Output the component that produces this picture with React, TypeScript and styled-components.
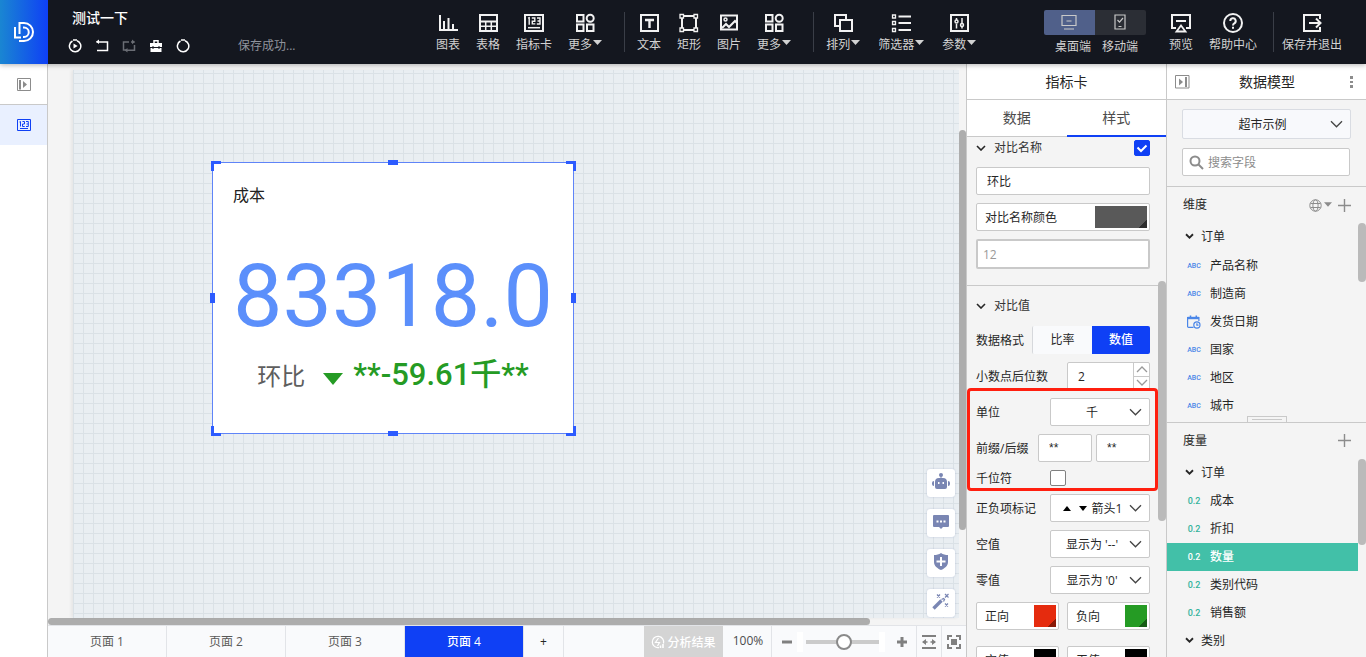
import React from 'react';
import styled, { createGlobalStyle, css } from 'styled-components';

const blue = '#0f40f5';
const line = '#c9c9c9';
const panelBg = '#f4f4f4';
const teal = '#42c0a8';

const GlobalStyle = createGlobalStyle`
  * { box-sizing: border-box; }
  body { margin: 0; overflow: hidden; }
  body, button, input, select {
    font-family: "Open Sans", "Noto Sans CJK SC", sans-serif;
    font-size: 12px;
    color: #262626;
  }
  button { padding: 0; border: 0; background: none; cursor: pointer; }
  svg { display: block; flex: none; }
  h1, h2, h3, p, ul { margin: 0; padding: 0; font-size: 12px; font-weight: 400; }
  li { list-style: none; }
`;

const Shell = styled.div`
  display: flex;
  flex-direction: column;
  height: 100vh;
  background: ${panelBg};
`;

/* ---------- header ---------- */

const Header = styled.header`
  display: flex;
  flex: none;
  height: 64px;
  padding-right: 24px;
  background: #14171f;
  box-shadow: 0 1px 5px rgba(0, 0, 0, 0.3);
  position: relative;
  z-index: 2;
`;

const Logo = styled.a`
  display: flex;
  align-items: center;
  justify-content: center;
  width: 48px;
  color: #fff;
  background: linear-gradient(90deg, #1a86d2, #0f40f5);
`;

const DocInfo = styled.div`
  flex: none;
  width: 388px;
  padding: 8px 0 0 20px;
`;

const DocTitle = styled.h1`
  padding-left: 4px;
  color: #fff;
  font-size: 14px;
  font-weight: 500;
  line-height: 20px;
`;

const DocActions = styled.div`
  display: flex;
  align-items: center;
  gap: 13px;
  height: 20px;
  margin-top: 8px;
`;

const IconButton = styled.button<{ $color?: string }>`
  display: flex;
  color: ${(p) => p.$color || '#fff'};
`;

const SaveState = styled.span`
  margin-left: 35px;
  color: #8f939c;
  font-size: 12px;
  line-height: 20px;
`;

const Toolbar = styled.nav`
  display: flex;
  flex: none;
`;

const ToolGroup = styled.div<{ $gap?: number }>`
  display: flex;
  gap: ${(p) => p.$gap || 16}px;
`;

const Divider = styled.span<{ $before: number; $after: number }>`
  width: 1px;
  height: 40px;
  margin: 12px ${(p) => p.$after}px 0 ${(p) => p.$before}px;
  background: #3a3e47;
`;

const Tool = styled.button`
  display: flex;
  flex-direction: column;
  align-items: center;
  gap: 3px;
  padding-top: 13px;
  height: 54px;
  color: #f2f2f2;
`;

const ToolLabel = styled.span`
  display: flex;
  align-items: center;
  gap: 1px;
  color: #d2d2d2;
  font-size: 12px;
  line-height: 18px;
  white-space: nowrap;
  svg { margin-bottom: 4px; }
`;

const HeaderEnd = styled.div`
  display: flex;
  margin-left: auto;
`;

const DeviceSwitch = styled.div`
  width: 102px;
  margin-right: 23px;
  padding-top: 10px;
`;

const DeviceButtons = styled.div`
  display: flex;
  border-radius: 2px;
  overflow: hidden;
`;

const DeviceButton = styled.button<{ $active?: boolean }>`
  display: flex;
  flex: 1;
  align-items: center;
  justify-content: center;
  height: 25px;
  padding-bottom: 1px;
  color: #c9c9c9;
  background: ${(p) => (p.$active ? '#50608a' : '#2b2e35')};
`;

const DeviceLabels = styled.div`
  display: flex;
  justify-content: space-between;
  padding: 2px 8px 0 11px;
  color: #d2d2d2;
  line-height: 20px;
`;

/* ---------- body ---------- */

const Body = styled.div`
  display: flex;
  flex: 1;
  min-height: 0;
`;

const Rail = styled.aside`
  flex: none;
  width: 48px;
  background: #fff;
  border-right: 1px solid ${line};
`;

const RailButton = styled.button<{ $active?: boolean }>`
  display: flex;
  align-items: center;
  justify-content: center;
  width: 100%;
  height: ${(p) => (p.$active ? 40 : 41)}px;
  border-bottom: ${(p) => (p.$active ? 0 : 1)}px solid ${line};
  color: ${(p) => (p.$active ? blue : '#8c8c8c')};
  background: ${(p) => (p.$active ? '#e9f0ff' : '#fff')};
`;

const Workspace = styled.main`
  display: flex;
  flex: 1;
  flex-direction: column;
  min-width: 0;
`;

const Stage = styled.div`
  display: flex;
  flex: 1;
  min-height: 0;
  padding-left: 25px;
`;

const Canvas = styled.div`
  position: relative;
  flex: 1;
  margin-top: 6px;
  background-color: #e9eef2;
  background-image: linear-gradient(90deg, #dae1e6 1px, transparent 1px),
    linear-gradient(#dae1e6 1px, transparent 1px);
  background-size: 10px 10px;
  background-position: 0 3px;
  box-shadow: -2px 0 3px rgba(0, 0, 0, 0.06);
`;

const VTrack = styled.div<{ $width: number }>`
  flex: none;
  width: ${(p) => p.$width}px;
`;

const VThumb = styled.div<{ $top: number; $size: number; $dark?: boolean }>`
  height: ${(p) => p.$size}px;
  border-radius: 4px;
  background: ${(p) => (p.$dark ? '#adadad' : '#bababa')};
  transform: translateY(${(p) => p.$top}px);
`;

const HTrack = styled.div`
  flex: none;
  height: 7px;
`;

const HThumb = styled.div`
  width: 822px;
  height: 7px;
  max-width: 100%;
  border-radius: 4px;
  background: #adadad;
`;

const Card = styled.section`
  position: absolute;
  left: 139px;
  top: 92px;
  width: 362px;
  height: 272px;
  border: 1px solid #5f84f8;
  background: #fff;
`;

const CardTitle = styled.h2`
  padding: 20px 20px 0;
  color: #222;
  font-size: 16px;
  line-height: 24px;
`;

const CardValue = styled.p`
  padding-top: 34px;
  color: #5b8ffb;
  font-family: Roboto, sans-serif;
  font-size: 88px;
  line-height: 110px;
  text-align: center;
`;

const CardCompare = styled.p`
  display: flex;
  align-items: baseline;
  justify-content: center;
  height: 48px;
  color: #5e5e5e;
  font-size: 24px;
`;

const CompareValue = styled.span`
  margin-left: 10px;
  color: #259b24;
  font-family: Roboto, "Noto Sans CJK SC", sans-serif;
  font-size: 31px;
  font-weight: 500;
  line-height: 48px;
`;

const Triangle = styled.span`
  margin: 0 0 1px 18px;
  border: 10px solid transparent;
  border-top: 12px solid #259b24;
  border-bottom: 0;
`;

const corner = {
  nw: css`left: -2px; top: -2px; border-width: 3px 0 0 3px;`,
  ne: css`right: -3px; top: -2px; border-width: 3px 3px 0 0;`,
  sw: css`left: -2px; bottom: -3px; border-width: 0 0 3px 3px;`,
  se: css`right: -3px; bottom: -3px; border-width: 0 3px 3px 0;`,
};

const Corner = styled.i<{ $at: keyof typeof corner }>`
  position: absolute;
  width: 10px;
  height: 10px;
  border: 0 solid #2c5bff;
  ${(p) => corner[p.$at]}
`;

const edge = {
  n: css`left: calc(50% - 5px); top: -3px; width: 10px; height: 5px;`,
  s: css`left: calc(50% - 5px); bottom: -3px; width: 10px; height: 5px;`,
  w: css`left: -3px; top: calc(50% - 5px); width: 5px; height: 10px;`,
  e: css`right: -3px; top: calc(50% - 5px); width: 5px; height: 10px;`,
};

const Edge = styled.i<{ $at: keyof typeof edge }>`
  position: absolute;
  background: #2c5bff;
  ${(p) => edge[p.$at]}
`;

const FloatTools = styled.div`
  position: absolute;
  right: 4px;
  bottom: 1px;
  display: flex;
  flex-direction: column;
  gap: 12px;
`;

const FloatTool = styled.button`
  display: flex;
  align-items: center;
  justify-content: center;
  width: 28px;
  height: 28px;
  padding-bottom: 3px;
  border-radius: 3px;
  color: #7a86b3;
  background: #fff;
  box-shadow: 0 0 2px rgba(80, 100, 160, 0.3);
`;

/* ---------- footer ---------- */

const Footer = styled.footer`
  display: flex;
  flex: none;
  height: 32px;
  border-top: 1px solid #e2e4e8;
  background: #f9fafc;
`;

const PageTab = styled.button<{ $active?: boolean }>`
  width: 119px;
  padding-bottom: 2px;
  border-right: 1px solid #e2e4e8;
  color: ${(p) => (p.$active ? '#fff' : '#595959')};
  font-weight: ${(p) => (p.$active ? 500 : 400)};
  background: ${(p) => (p.$active ? blue : 'transparent')};
`;

const AddPage = styled.button`
  width: 40px;
  border-right: 1px solid #e2e4e8;
`;

const FooterEnd = styled.div`
  display: flex;
  margin-left: auto;
`;

const AnalysisButton = styled.button`
  display: flex;
  align-items: center;
  justify-content: center;
  gap: 2px;
  width: 79px;
  color: #fff;
  font-weight: 500;
  background: #d4d4d4;
`;

const ZoomLevel = styled.output`
  width: 49px;
  padding-left: 2px;
  border-right: 1px solid #e2e4e8;
  color: #4c4c4c;
  line-height: 30px;
  text-align: center;
`;

const ZoomBar = styled.div`
  display: flex;
  align-items: center;
  justify-content: space-between;
  width: 145px;
  padding: 0 9px 0 10px;
  border-right: 1px solid #e2e4e8;
`;

const ZoomRange = styled.input`
  appearance: none;
  width: 88px;
  height: 20px;
  margin: 0 7px 0 0;
  padding: 0 0 0 3px;
  border: solid #fff;
  border-width: 0 6px;
  background: transparent;
  &::-webkit-slider-runnable-track {
    height: 4px;
    background: #cbcbcb;
  }
  &::-webkit-slider-thumb {
    appearance: none;
    width: 16px;
    height: 16px;
    margin-top: -6px;
    border: 2px solid #8a8a8a;
    border-radius: 50%;
    background: #fff;
  }
`;

const FooterIcon = styled.button`
  display: flex;
  align-items: center;
  justify-content: center;
  width: 24px;
  color: #808080;
  & + & { width: 25px; border-left: 1px solid #e2e4e8; }
`;

/* ---------- side panels ---------- */

const Panel = styled.aside`
  display: flex;
  flex: none;
  flex-direction: column;
  width: 200px;
  min-height: 0;
  border-left: 1px solid ${line};
  background: ${panelBg};
`;

const PanelHead = styled.header`
  display: flex;
  flex: none;
  align-items: center;
  justify-content: center;
  height: 36px;
  padding: 0 8px;
  border-bottom: 1px solid ${line};
  background: #fff;
`;

const PanelTitle = styled.h2`
  flex: 1;
  font-size: 14px;
  line-height: 20px;
  text-align: center;
`;

const Tabs = styled.div`
  display: flex;
  flex: none;
  height: 37px;
  background: #fff;
`;

const Tab = styled.button<{ $active?: boolean }>`
  flex: 1;
  padding-bottom: ${(p) => (p.$active ? 1 : 2)}px;
  border-bottom: ${(p) => (p.$active ? `2px solid ${blue}` : `1px solid ${line}`)};
  color: #4c4c4c;
  font-size: 14px;
`;

const PanelScroll = styled.div`
  display: flex;
  flex: 1;
  min-height: 0;
  overflow: hidden;
`;

const StyleForm = styled.form`
  flex: 1;
`;

const Section = styled.fieldset<{ $divided?: boolean }>`
  display: flex;
  flex-direction: column;
  gap: 8px;
  min-width: 0;
  margin: 0;
  padding: ${(p) => (p.$divided ? '8px 8px 0 9px' : '0 8px 16px 9px')};
  border: 0;
  border-top: ${(p) => (p.$divided ? `1px solid ${line}` : '0')};
`;

const SectionHead = styled.div<{ $height: number }>`
  display: flex;
  align-items: center;
  gap: 8px;
  height: ${(p) => p.$height}px;
  label, h3 { flex: 1; padding-bottom: 2px; color: #333; }
`;

const Row = styled.div<{ $short?: boolean }>`
  display: flex;
  align-items: center;
  justify-content: space-between;
  height: ${(p) => (p.$short ? 16 : 28)}px;
  > label, > span:first-child { padding-bottom: 1px; }
`;

const HighlightedRows = styled.div`
  position: relative;
  display: flex;
  flex-direction: column;
  gap: 8px;
  &::after {
    content: '';
    position: absolute;
    inset: -10px -8px -5px -9px;
    border: 3px solid #ff1f0f;
    border-radius: 4px;
    pointer-events: none;
  }
`;

const TextInput = styled.input<{ $width?: number; $thick?: boolean }>`
  width: ${(p) => (p.$width ? `${p.$width}px` : '100%')};
  height: ${(p) => (p.$thick ? 30 : 28)}px;
  padding: 0 ${(p) => (p.$thick ? 5 : 10)}px;
  border: ${(p) => (p.$thick ? 2 : 1)}px solid ${line};
  border-radius: 2px;
  outline: 0;
  background: #fff;
  &::placeholder { color: #999; }
`;

const AffixInput = styled(TextInput)`
  font-family: "Liberation Sans", "Noto Sans CJK SC", sans-serif;
`;

const CheckBox = styled.input`
  appearance: none;
  width: 16px;
  height: 16px;
  margin: 0;
  border: 1px solid #808080;
  border-radius: 2px;
  background: #fff;
  &:checked {
    border-color: ${blue};
    background: ${blue};
  }
`;

const CheckCell = styled.span<{ $width: number }>`
  display: grid;
  width: ${(p) => p.$width}px;
  > * { grid-area: 1 / 1; }
  svg { color: #fff; pointer-events: none; }
`;

const ColorButton = styled.button<{ $width?: number }>`
  display: flex;
  align-items: center;
  justify-content: space-between;
  width: ${(p) => (p.$width ? `${p.$width}px` : '100%')};
  height: 28px;
  padding: 0 2px 0 8px;
  border: 1px solid ${line};
  border-radius: 2px;
  background: #fff;
`;

const Swatch = styled.span<{ $color: string; $corner: string; $width: number }>`
  width: ${(p) => p.$width}px;
  height: 22px;
  background: linear-gradient(135deg, transparent 50%, ${(p) => p.$corner} 50%) right bottom / 8px 8px no-repeat,
    ${(p) => p.$color};
`;

const Toggle = styled.div`
  display: flex;
  border-left: 1px solid #d6d8dc;
  border-radius: 2px;
  overflow: hidden;
`;

const ToggleButton = styled.button<{ $active?: boolean }>`
  width: ${(p) => (p.$active ? 58 : 59)}px;
  height: 28px;
  padding-bottom: 2px;
  color: ${(p) => (p.$active ? '#fff' : '#262626')};
  font-weight: ${(p) => (p.$active ? 500 : 400)};
  background: ${(p) => (p.$active ? blue : '#f9fafc')};
`;

const Stepper = styled.div`
  display: flex;
  width: 83px;
  height: 28px;
  border: 1px solid ${line};
  border-radius: 2px;
  background: #fff;
  input {
    flex: 1;
    min-width: 0;
    padding: 0 10px;
    border: 0;
    outline: 0;
    background: none;
  }
`;

const StepButtons = styled.div`
  display: flex;
  flex-direction: column;
  width: 16px;
  border-left: 1px solid ${line};
  button {
    display: flex;
    flex: 1;
    align-items: center;
    justify-content: center;
    color: #999;
  }
  button + button { border-top: 1px solid ${line}; }
`;

const SelectBox = styled.span<{ $wide?: boolean }>`
  display: grid;
  align-items: center;
  width: ${(p) => (p.$wide ? '100%' : '100px')};
  > * { grid-area: 1 / 1; }
  > svg {
    justify-self: end;
    margin-right: 8px;
    color: #444;
    pointer-events: none;
  }
  select {
    appearance: none;
    width: 100%;
    height: ${(p) => (p.$wide ? 30 : 28)}px;
    padding: ${(p) => (p.$wide ? '0 16px 0 8px' : '0 24px 0 8px')};
    border: 1px solid ${(p) => (p.$wide ? '#d9dce2' : line)};
    border-radius: 2px;
    outline: 0;
    background: ${(p) => (p.$wide ? '#f8f9fc' : '#fff')};
    text-align-last: center;
  }
`;

const ArrowMarks = styled.span`
  z-index: 1;
  display: flex;
  justify-self: start;
  gap: 8px;
  padding-left: 13px;
  pointer-events: none;
  & + select { padding-left: 34px; padding-right: 20px; }
`;

const Inline = styled.div<{ $gap: number }>`
  display: flex;
  align-items: center;
  gap: ${(p) => p.$gap}px;
`;

const LastRow = styled(Row)`
  margin-top: 8px;
`;

const Source = styled.div`
  display: flex;
  flex: none;
  flex-direction: column;
  gap: 9px;
  padding: 9px 15px 10px;
  border-bottom: 1px solid ${line};
`;

const SearchBox = styled.label`
  display: flex;
  align-items: center;
  gap: 4px;
  height: 28px;
  margin-right: 1px;
  padding: 0 6px;
  border: 1px solid ${line};
  border-radius: 2px;
  color: #8c8c8c;
  background: #fff;
  input {
    flex: 1;
    min-width: 0;
    padding: 0;
    border: 0;
    outline: 0;
    background: none;
  }
  input::placeholder { color: #8c8c8c; }
`;

const FieldGroup = styled.section`
  position: relative;
  display: flex;
  flex: 1 1 0;
  flex-direction: column;
  min-height: 0;
  & + & { border-top: 1px solid ${line}; }
`;

const GroupHead = styled.header`
  display: flex;
  flex: none;
  align-items: center;
  gap: 6px;
  height: 36px;
  padding: 0 15px 0 16px;
  color: #8c8c8c;
  h3 { flex: 1; color: #262626; line-height: 18px; }
`;

const GroupBody = styled.div`
  display: flex;
  flex: 1;
  min-height: 0;
  overflow: hidden;
`;

const FieldList = styled.ul`
  flex: 1;
`;

const Folder = styled.li`
  display: flex;
  align-items: center;
  gap: 7px;
  height: 28px;
  padding: 0 0 2px 18px;
`;

const Field = styled.li<{ $active?: boolean }>`
  display: flex;
  align-items: center;
  gap: 8px;
  height: 28px;
  padding: 0 0 1px 19px;
  color: ${(p) => (p.$active ? '#fff' : '#262626')};
  font-weight: ${(p) => (p.$active ? 500 : 400)};
  background: ${(p) => (p.$active ? teal : 'transparent')};
`;

const TypeTag = styled.span<{ $tone: string; $small?: boolean }>`
  display: flex;
  justify-content: center;
  width: 16px;
  padding-top: 2px;
  color: ${(p) => p.$tone};
  font-family: Roboto, sans-serif;
  font-size: ${(p) => (p.$small ? 7 : 9)}px;
  font-weight: 500;
`;

const ResizeHandle = styled.span`
  position: absolute;
  left: 80px;
  bottom: 0;
  width: 40px;
  height: 6px;
  border: 1px solid ${line};
  border-bottom: 0;
  background: linear-gradient(${line}, ${line}) center / 30px 1px no-repeat;
`;

/* ---------- icons ---------- */

const Svg = ({ s = 20, w, sw = 2, children }: { s?: number; w?: number; sw?: number; children: React.ReactNode }) => (
  <svg
    width={w || s}
    height={s}
    viewBox={`0 0 ${w || s} ${s}`}
    fill="none"
    stroke="currentColor"
    strokeWidth={sw}
    aria-hidden="true"
  >
    {children}
  </svg>
);

const DownTriangle = ({ size = 9 }: { size?: number }) => (
  <svg width={size} height="6" viewBox="0 0 9 6" fill="currentColor" aria-hidden="true">
    <path d="M0 0h9L4.5 5z" />
  </svg>
);

const Chevron = ({ w = 13, up = false, sw = 1.3 }: { w?: number; up?: boolean; sw?: number }) => {
  const h = w / 2 + 1;
  return (
    <svg width={w} height={Math.ceil(h)} viewBox={`0 0 ${w} ${h}`} fill="none" stroke="currentColor" strokeWidth={sw} aria-hidden="true">
      <path d={up ? `M1 ${h - 1}L${w / 2} 1 ${w - 1} ${h - 1}` : `M1 1L${w / 2} ${h - 1} ${w - 1} 1`} />
    </svg>
  );
};

const icons = {
  chart: (
    <Svg>
      <path d="M2 2v15h18" />
      <path d="M6 17V8M10.5 17V5M15 17v-6" />
    </Svg>
  ),
  table: (
    <Svg>
      <path d="M2 2h17v16H2zM2 8.5h17" />
      <path strokeWidth="1.5" d="M2 13.3h17M7.7 8v10M13.3 8v10" />
    </Svg>
  ),
  kpi: (
    <Svg w={22}>
      <path d="M2 2h18v16H2z" />
      <path strokeWidth="1.5" d="M5 14.7h12" />
      <path strokeWidth="1.4" d="M5 5.2l1.2-.5v7M8.8 5h3v3.2h-2.500v2.700h3M14 5h3v6h-3.200M14.500 8H17" />
    </Svg>
  ),
  more: (
    <Svg w={22}>
      <path d="M3 2h6.500v6.500H3zM3 11.500h6.500V18H3zM13 11.500h6.500V18H13z" />
      <circle cx="16.200" cy="5.200" r="3.500" />
    </Svg>
  ),
  text: (
    <Svg>
      <path d="M2 2h17v16H2z" />
      <path strokeWidth="2.400" d="M6 7h9M10.500 6v9" />
    </Svg>
  ),
  rect: (
    <Svg>
      <path strokeWidth="2" d="M3 5v10M17 5v10M5 3h10M5 17h10" />
      <path strokeWidth="1.300" d="M1 1.500h3.500V5H1zM15 1.500h3.500V5H15zM1 15h3.500v3.500H1zM15 15h3.500v3.500H15z" />
    </Svg>
  ),
  image: (
    <Svg>
      <path d="M2 2.500h16v14H2z" />
      <circle cx="6.500" cy="6.500" r="1.500" strokeWidth="1.500" />
      <path strokeWidth="2" d="M3 15l4-4 3 3 6-6 2 2" />
    </Svg>
  ),
  arrange: (
    <Svg>
      <path d="M6 13H2V2h11v4" />
      <path d="M7 7h12v11H7z" />
    </Svg>
  ),
  filter: (
    <Svg>
      <path d="M7.500 3.500H20M7.500 10H20M7.500 17H20" />
      <path strokeWidth="1.300" d="M1.500 2h3v3h-3zM1.500 8.500h3v3h-3zM1.500 15.500h3v3h-3z" />
    </Svg>
  ),
  params: (
    <Svg>
      <path d="M2 2h17v16H2z" />
      <path strokeWidth="1.500" d="M7.500 5v2M7.500 11v4.500M13 5v5M13 13.500v2" />
      <circle cx="7.500" cy="8.500" r="1.500" strokeWidth="1.500" />
      <circle cx="13" cy="12" r="1.500" strokeWidth="1.500" />
    </Svg>
  ),
  preview: (
    <Svg w={22}>
      <path d="M6 15H2V2h18v13h-4" />
      <path d="M6 8h10" />
      <path strokeWidth="1.800" d="M11 12.500l4.500 6h-9z" />
    </Svg>
  ),
  help: (
    <Svg w={22}>
      <circle cx="11" cy="10" r="9" />
      <path d="M8.300 8a2.700 2.700 0 1 1 4 2.300c-1 .6-1.300 1-1.300 2.200M11 13.700v2" />
    </Svg>
  ),
  exit: (
    <Svg>
      <path d="M18 6V2H2v16h16v-4" />
      <path d="M7 10h11M14 5.500l4.500 4.500-4.500 4.500" />
    </Svg>
  ),
};

type ToolSpec = { icon: keyof typeof icons; label: string; menu?: boolean };

const elementTools: ToolSpec[] = [
  { icon: 'chart', label: '图表' },
  { icon: 'table', label: '表格' },
  { icon: 'kpi', label: '指标卡' },
  { icon: 'more', label: '更多', menu: true },
];

const shapeTools: ToolSpec[] = [
  { icon: 'text', label: '文本' },
  { icon: 'rect', label: '矩形' },
  { icon: 'image', label: '图片' },
  { icon: 'more', label: '更多', menu: true },
];

const pageTools: ToolSpec[] = [
  { icon: 'arrange', label: '排列', menu: true },
  { icon: 'filter', label: '筛选器', menu: true },
  { icon: 'params', label: '参数', menu: true },
];

const ToolItem = ({ icon, label, menu }: ToolSpec) => (
  <Tool>
    {icons[icon]}
    <ToolLabel>
      {label}
      {menu && <DownTriangle />}
    </ToolLabel>
  </Tool>
);

const ToolList = ({ tools, gap }: { tools: ToolSpec[]; gap?: number }) => (
  <ToolGroup $gap={gap}>
    {tools.map((tool) => (
      <ToolItem key={tool.label} {...tool} />
    ))}
  </ToolGroup>
);

const SelectField = ({ id, value, marks, wide, label }: { id: string; value: string; marks?: boolean; wide?: boolean; label?: string }) => (
  <SelectBox $wide={wide}>
    {marks && (
      <ArrowMarks>
        <svg width="8" height="5" viewBox="0 0 8 5" aria-hidden="true"><path d="M0 5h8L4 0z" /></svg>
        <svg width="8" height="5" viewBox="0 0 8 5" aria-hidden="true"><path d="M0 0h8L4 5z" /></svg>
      </ArrowMarks>
    )}
    <select id={id} aria-label={label}>
      <option>{value}</option>
    </select>
    <Chevron />
  </SelectBox>
);

const ColorField = ({ label, color, shade, width, swatch }: { label: string; color: string; shade: string; width?: number; swatch: number }) => (
  <ColorButton type="button" $width={width}>
    {label}
    <Swatch $color={color} $corner={shade} $width={swatch} />
  </ColorButton>
);

const CalendarIcon = () => (
  <svg width="14" height="14" viewBox="0 0 14 14" fill="none" stroke="currentColor" strokeWidth="1.2" aria-hidden="true">
    <path d="M6.500 12.400H1.600a1 1 0 0 1-1-1V2.500h11.300v3.500" />
    <path strokeWidth="2.400" d="M.6 3h11.300" />
    <path strokeWidth="1.500" d="M3.500.5v2M9.300.5v2" />
    <circle cx="9.900" cy="10" r="3.100" />
    <path d="M9.900 8.200v2h1.600" />
  </svg>
);

const dimensions = ['产品名称', '制造商', '发货日期', '国家', '地区', '城市'];
const measures = ['成本', '折扣', '数量', '类别代码', '销售额'];

export default function App() {
  return (
    <Shell>
      <GlobalStyle />
      <Header>
        <Logo href="#" aria-label="首页">
          <Svg s={22} sw={2}>
            <path d="M2 6v10.500h6" />
            <path d="M6.500 13V2h4.500a9 9 0 0 1 0 18H6" />
            <path d="M10 6.500h1a4.700 4.700 0 0 1 0 9.500h-1" />
          </Svg>
        </Logo>
        <DocInfo>
          <DocTitle>测试一下</DocTitle>
          <DocActions>
            <IconButton aria-label="刷新数据">
              <Svg s={14} sw={1.5}>
                <path d="M4.500 2a5.700 5.700 0 1 0 4.500-.3M5 1h4" />
                <path d="M5.500 4.500L9.700 7l-4.200 2.500z" fill="currentColor" stroke="none" />
              </Svg>
            </IconButton>
            <IconButton aria-label="撤销">
              <Svg s={14} sw={1.5}>
                <path d="M1.500 3H12.500v8.500H2" />
                <path d="M4 .5v4.500L1 2.800z" fill="currentColor" stroke="none" />
              </Svg>
            </IconButton>
            <IconButton aria-label="重做" $color="#6a6d74">
              <Svg s={14} sw={1.5}>
                <path d="M7 3H1.500v8H4M5 11.300h7.500V6M9 3h3.500" />
                <path d="M10 .5V5.300l3-2.400zM5.500 9v4.500l-3-2.200z" fill="currentColor" stroke="none" />
              </Svg>
            </IconButton>
            <IconButton aria-label="工具箱">
              <Svg s={14} sw={1.5}>
                <path d="M5 4V1.800h4V4" />
                <path d="M1 4h12v4H1zM1.500 9h11v4h-11z" fill="currentColor" stroke="none" />
                <path stroke="#14171f" strokeWidth="1" d="M4 7v3M10 7v3" />
              </Svg>
            </IconButton>
            <IconButton aria-label="刷新">
              <Svg s={14} sw={1.5}>
                <path d="M4.500 2a5.700 5.700 0 1 0 4.500-.3M5 1h4" />
              </Svg>
            </IconButton>
            <SaveState>保存成功...</SaveState>
          </DocActions>
        </DocInfo>
        <Toolbar>
          <ToolList tools={elementTools} />
          <Divider $before={22} $after={12} />
          <ToolList tools={shapeTools} />
          <Divider $before={22} $after={12} />
          <ToolList tools={pageTools} gap={18} />
        </Toolbar>
        <HeaderEnd>
          <DeviceSwitch>
            <DeviceButtons>
              <DeviceButton $active aria-labelledby="device-desktop">
                <Svg s={16} w={18} sw={1.2}>
                  <path d="M2 1.500h14v10H2zM6.500 7h5M4 15h10" />
                </Svg>
              </DeviceButton>
              <DeviceButton aria-labelledby="device-mobile">
                <Svg s={16} w={12} sw={1.2}>
                  <path d="M1 1h10v14H1zM3.500 6l2 2.200L9 4M4.500 12.500h3" />
                </Svg>
              </DeviceButton>
            </DeviceButtons>
            <DeviceLabels>
              <span id="device-desktop">桌面端</span>
              <span id="device-mobile">移动端</span>
            </DeviceLabels>
          </DeviceSwitch>
          <ToolGroup>
            <ToolItem icon="preview" label="预览" />
            <ToolItem icon="help" label="帮助中心" />
          </ToolGroup>
          <Divider $before={16} $after={8} />
          <ToolItem icon="exit" label="保存并退出" />
        </HeaderEnd>
      </Header>

      <Body>
        <Rail>
          <RailButton aria-label="展开页面列表">
            <Svg s={15} sw={1}>
              <path d="M1.500 1.500h13v12h-13z" />
              <path strokeWidth="2" d="M4 3v9.500" />
              <path d="M7 4l4 3.500-4 3.500z" fill="currentColor" stroke="none" />
            </Svg>
          </RailButton>
          <RailButton $active aria-label="指标卡">
            <Svg s={14} sw={1}>
              <path d="M.5 1.500h13v11H.5z" />
              <path d="M3 10.500h8M2.500 4l1-.5v5M5.500 3.500h2V6h-2v2.500h2.200M9 3.500h2.300v5H9M9.500 6H11" />
            </Svg>
          </RailButton>
        </Rail>

        <Workspace>
          <Stage>
            <Canvas>
              <Card>
                <CardTitle>成本</CardTitle>
                <CardValue>83318.0</CardValue>
                <CardCompare>
                  环比
                  <Triangle />
                  <CompareValue>**-59.61千**</CompareValue>
                </CardCompare>
                <Corner $at="nw" />
                <Corner $at="ne" />
                <Corner $at="sw" />
                <Corner $at="se" />
                <Edge $at="n" />
                <Edge $at="s" />
                <Edge $at="w" />
                <Edge $at="e" />
              </Card>
              <FloatTools>
                <FloatTool aria-label="智能助手">
                  <svg width="18" height="17" viewBox="0 0 18 17" fill="currentColor" aria-hidden="true">
                    <circle cx="9" cy="2" r="2" />
                    <path d="M8.500 3h1v3h-1zM3 9a4 4 0 0 1 4-4h4a4 4 0 0 1 4 4v5a2 2 0 0 1-2 2H5a2 2 0 0 1-2-2zM2 8v5a2 2 0 0 1-2-2v-1a2 2 0 0 1 2-2zM16 8v5a2 2 0 0 0 2-2v-1a2 2 0 0 0-2-2z" />
                    <path fill="#fff" d="M6 9h1.500v2H6zM10.500 9H12v2h-1.500z" />
                  </svg>
                </FloatTool>
                <FloatTool aria-label="评论">
                  <svg width="16" height="14" viewBox="0 0 16 14" fill="currentColor" aria-hidden="true">
                    <path d="M1 0h14a1 1 0 0 1 1 1v10a1 1 0 0 1-1 1h-5l-2 2-2-2H1a1 1 0 0 1-1-1V1a1 1 0 0 1 1-1z" />
                    <path fill="#fff" d="M3.500 5.500h2v2h-2zM7 5.500h2v2H7zM10.500 5.500h2v2h-2z" />
                  </svg>
                </FloatTool>
                <FloatTool aria-label="安全">
                  <svg width="16" height="17" viewBox="0 0 16 17" fill="currentColor" aria-hidden="true">
                    <path d="M8 0c2 1.500 4.500 2 7 2v7c0 4-3.500 6.500-7 8-3.500-1.500-7-4-7-8V2c2.500 0 5-.5 7-2z" />
                    <path stroke="#fff" strokeWidth="2" d="M8 4v9M3.500 8.500h9" />
                  </svg>
                </FloatTool>
                <FloatTool aria-label="美化">
                  <Svg s={18} sw={1.2}>
                    <path strokeWidth="3.400" d="M1.500 15.500l8-8" />
                    <path strokeWidth="1.300" d="M9.500 6.500l2-1 1 1-1 2" />
                    <path d="M5 1.500l3 3M8 1.500l-3 3M13 1l3.500 3.500M16.500 1L13 4.500M13 10.500l3 3M16 10.500l-3 3" />
                  </Svg>
                </FloatTool>
              </FloatTools>
            </Canvas>
            <VTrack $width={7}>
              <VThumb $top={66} $size={400} $dark />
            </VTrack>
          </Stage>
          <HTrack>
            <HThumb />
          </HTrack>
          <Footer>
            <PageTab>页面 1</PageTab>
            <PageTab>页面 2</PageTab>
            <PageTab>页面 3</PageTab>
            <PageTab $active>页面 4</PageTab>
            <AddPage aria-label="新增页面">+</AddPage>
            <FooterEnd>
              <AnalysisButton>
                <Svg s={14} sw={1.2}>
                  <path d="M12.500 8.500A5.700 5.700 0 1 0 8 12.600" />
                  <path d="M7.500 3L4.500 7.500h4L6.500 11" />
                  <path strokeWidth="1.600" d="M9.500 13V10.500M12 13V9" />
                </Svg>
                分析结果
              </AnalysisButton>
              <ZoomLevel>100%</ZoomLevel>
              <ZoomBar>
                <IconButton aria-label="缩小" $color="#808080">
                  <Svg s={10} sw={3}><path d="M0 5h10" /></Svg>
                </IconButton>
                <ZoomRange type="range" min={0} max={200} defaultValue={106} aria-label="缩放比例" />
                <IconButton aria-label="放大" $color="#808080">
                  <Svg s={10} sw={3}><path d="M0 5h10M5 0v10" /></Svg>
                </IconButton>
              </ZoomBar>
              <FooterIcon aria-label="适应宽度">
                <Svg s={14} sw={2}>
                  <path d="M0 1h14M0 13h14" />
                  <path strokeWidth="1.500" d="M1 7h4.500M8.500 7H13" />
                  <path d="M4 4v6L0 7zM10 4v6l4-3z" fill="currentColor" stroke="none" />
                </Svg>
              </FooterIcon>
              <FooterIcon aria-label="适应页面">
                <Svg s={14} sw={2}>
                  <path d="M1 5V1h4M9 1h4v4M13 9v4H9M5 13H1V9" />
                  <path d="M4 4h6v6H4z" fill="currentColor" stroke="none" />
                </Svg>
              </FooterIcon>
            </FooterEnd>
          </Footer>
        </Workspace>

        <Panel>
          <PanelHead>
            <PanelTitle>指标卡</PanelTitle>
          </PanelHead>
          <Tabs>
            <Tab>数据</Tab>
            <Tab $active>样式</Tab>
          </Tabs>
          <PanelScroll>
            <StyleForm>
              <Section>
                <SectionHead $height={22}>
                  <Chevron w={10} sw={1.6} />
                  <label htmlFor="compare-name">对比名称</label>
                  <CheckCell $width={16}>
                    <CheckBox type="checkbox" id="compare-name" defaultChecked />
                    <Svg s={16} sw={2}><path d="M3.500 7.500l3.500 3.500 5.500-5.500" /></Svg>
                  </CheckCell>
                </SectionHead>
                <TextInput defaultValue="环比" aria-label="名称" />
                <ColorField label="对比名称颜色" color="#595959" shade="#2e2e2e" swatch={52} />
                <TextInput $thick placeholder="12" aria-label="字号" />
              </Section>
              <Section $divided>
                <SectionHead $height={24}>
                  <Chevron w={10} sw={1.6} />
                  <h3>对比值</h3>
                </SectionHead>
                <Row>
                  <span>数据格式</span>
                  <Toggle>
                    <ToggleButton type="button">比率</ToggleButton>
                    <ToggleButton type="button" $active>数值</ToggleButton>
                  </Toggle>
                </Row>
                <Row>
                  <label htmlFor="decimals">小数点后位数</label>
                  <Stepper>
                    <input id="decimals" defaultValue="2" />
                    <StepButtons>
                      <button type="button" aria-label="增加"><Chevron w={12} up /></button>
                      <button type="button" aria-label="减少"><Chevron w={12} /></button>
                    </StepButtons>
                  </Stepper>
                </Row>
                <HighlightedRows>
                  <Row>
                    <label htmlFor="unit">单位</label>
                    <SelectField id="unit" value="千" />
                  </Row>
                  <Row>
                    <label htmlFor="prefix">前缀/后缀</label>
                    <Inline $gap={4}>
                      <AffixInput id="prefix" $width={54} defaultValue="**" />
                      <AffixInput $width={54} defaultValue="**" aria-label="后缀" />
                    </Inline>
                  </Row>
                  <Row $short>
                    <label htmlFor="thousands">千位符</label>
                    <CheckCell $width={100}>
                      <CheckBox type="checkbox" id="thousands" />
                    </CheckCell>
                  </Row>
                </HighlightedRows>
                <Row>
                  <label htmlFor="marks">正负项标记</label>
                  <SelectField id="marks" value="箭头1" marks />
                </Row>
                <Row>
                  <label htmlFor="empty">空值</label>
                  <SelectField id="empty" value="显示为 '--'" />
                </Row>
                <Row>
                  <label htmlFor="zero">零值</label>
                  <SelectField id="zero" value="显示为 '0'" />
                </Row>
                <Row>
                  <ColorField label="正向" color="#e52b0e" shade="#8a1a08" width={83} swatch={22} />
                  <ColorField label="负向" color="#259b24" shade="#165c15" width={83} swatch={22} />
                </Row>
                <LastRow>
                  <ColorField label="空值" color="#000" shade="#000" width={83} swatch={22} />
                  <ColorField label="无值" color="#000" shade="#000" width={83} swatch={22} />
                </LastRow>
              </Section>
            </StyleForm>
            <VTrack $width={8}>
              <VThumb $top={144} $size={240} />
            </VTrack>
          </PanelScroll>
        </Panel>

        <Panel>
          <PanelHead>
            <IconButton aria-label="收起面板" $color="#8c8c8c">
              <Svg s={15} sw={1}>
                <path d="M.5 1.500h13.500v12.500H.5z" />
                <path strokeWidth="2" d="M11 3v10" />
                <path d="M4 4.500L8 8l-4 3.500z" fill="currentColor" stroke="none" />
              </Svg>
            </IconButton>
            <PanelTitle>数据模型</PanelTitle>
            <IconButton aria-label="更多操作" $color="#8c8c8c">
              <svg width="14" height="14" viewBox="0 0 14 14" fill="currentColor" aria-hidden="true">
                <path d="M6 1h3v3H6zM6 6h3v2H6zM6 10h3v3H6z" />
              </svg>
            </IconButton>
          </PanelHead>
          <Source>
            <SelectField id="source" label="数据模型" value="超市示例" wide />
            <SearchBox>
              <Svg s={15} sw={2}>
                <circle cx="6" cy="6" r="4.500" />
                <path d="M9.500 9.500l4.500 4.500" />
              </Svg>
              <input placeholder="搜索字段" aria-label="搜索字段" />
            </SearchBox>
          </Source>
          <FieldGroup>
            <GroupHead>
              <h3>维度</h3>
              <Inline $gap={2}>
                <Svg s={13} sw={1}>
                  <circle cx="6.500" cy="6.500" r="5.700" />
                  <ellipse cx="6.500" cy="6.500" rx="2.600" ry="5.700" />
                  <path d="M1.500 4.500h10M1.500 8.500h10" />
                </Svg>
                <DownTriangle size={8} />
              </Inline>
              <IconButton aria-label="新增维度" $color="#8c8c8c">
                <Svg s={13} sw={1.4}><path d="M0 6.500h13M6.500 0v13" /></Svg>
              </IconButton>
            </GroupHead>
            <GroupBody>
              <FieldList>
                <Folder>
                  <Chevron w={9} sw={1.8} />
                  订单
                </Folder>
                {dimensions.map((name) => (
                  <Field key={name}>
                    <TypeTag $tone="#4a86e8" $small>{name === '发货日期' ? <CalendarIcon /> : 'ABC'}</TypeTag>
                    {name}
                  </Field>
                ))}
              </FieldList>
              <VTrack $width={8}>
                <VThumb $top={0} $size={59} />
              </VTrack>
            </GroupBody>
            <ResizeHandle />
          </FieldGroup>
          <FieldGroup>
            <GroupHead>
              <h3>度量</h3>
              <IconButton aria-label="新增度量" $color="#8c8c8c">
                <Svg s={13} sw={1.4}><path d="M0 6.500h13M6.500 0v13" /></Svg>
              </IconButton>
            </GroupHead>
            <GroupBody>
              <FieldList>
                <Folder>
                  <Chevron w={9} sw={1.8} />
                  订单
                </Folder>
                {measures.map((name) => (
                  <Field key={name} $active={name === '数量'}>
                    <TypeTag $tone={name === '数量' ? '#fff' : '#35b39c'}>0.2</TypeTag>
                    {name}
                  </Field>
                ))}
                <Folder>
                  <Chevron w={9} sw={1.8} />
                  类别
                </Folder>
              </FieldList>
              <VTrack $width={8}>
                <VThumb $top={0} $size={86} />
              </VTrack>
            </GroupBody>
          </FieldGroup>
        </Panel>
      </Body>
    </Shell>
  );
}
